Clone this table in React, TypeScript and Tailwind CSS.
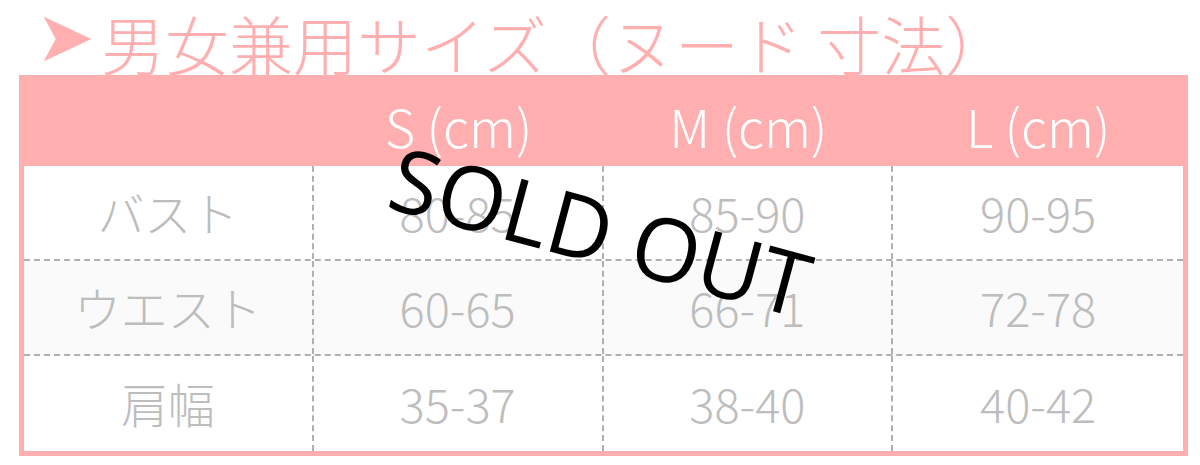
import React from 'react';

const cjk = '"Noto Sans CJK JP", "Noto Sans", sans-serif';

const sizes = ['S (cm)', 'M (cm)', 'L (cm)'];

const rows = [
  { label: 'バスト', values: ['80-85', '85-90', '90-95'], shaded: false },
  { label: 'ウエスト', values: ['60-65', '66-71', '72-78'], shaded: true },
  { label: '肩幅', values: ['35-37', '38-40', '40-42'], shaded: false },
];

export default function App() {
  return (
    <div className="relative w-[1200px] h-[465px] overflow-hidden bg-white" style={{ fontFamily: cjk }}>
      {/* title */}
      <div className="flex items-end h-[75px] pl-[36px] pb-[1px] text-[64px] leading-none font-light text-[#ffafaf] whitespace-nowrap">
        <span className="mr-[6px] mb-[2px] text-[70px]" style={{ fontFamily: '"DejaVu Sans", sans-serif' }}>
          ➤
        </span>
        <span>男女兼用サイズ（ヌード 寸法）</span>
      </div>

      {/* size table */}
      <div className="relative ml-[19px] w-[1169px] border-[5px] border-[#ffafaf]">
        <div className="grid grid-cols-4 h-[86px] bg-[#ffafaf] text-white text-[52px] font-light">
          <div />
          {sizes.map((s) => (
            <div key={s} className="flex items-center justify-center pt-[6px]">
              {s}
            </div>
          ))}
        </div>

        {rows.map((row, i) => (
          <div
            key={row.label}
            className={`grid grid-cols-4 h-[95px] text-[47px] font-light text-[#bdbdbd] ${
              row.shaded ? 'bg-[#fafafa]' : 'bg-white'
            } ${i < rows.length - 1 ? 'border-b-2 border-dashed border-[#b0b0b0]' : ''}`}
          >
            <div className="flex items-center justify-center border-r-2 border-dashed border-[#b0b0b0]">
              {row.label}
            </div>
            {row.values.map((v, j) => (
              <div
                key={v}
                className={`flex items-center justify-center ${
                  j < 2 ? 'border-r-2 border-dashed border-[#b0b0b0]' : ''
                }`}
              >
                {v}
              </div>
            ))}
          </div>
        ))}
      </div>

      {/* sold out stamp */}
      <div
        className="absolute left-[601px] top-[230px] -translate-x-1/2 -translate-y-1/2 rotate-[15deg] text-[88px] leading-none text-black whitespace-nowrap"
        style={{ fontFamily: '"Open Sans", "Noto Sans", sans-serif' }}
      >
        SOLD OUT
      </div>
    </div>
  );
}
